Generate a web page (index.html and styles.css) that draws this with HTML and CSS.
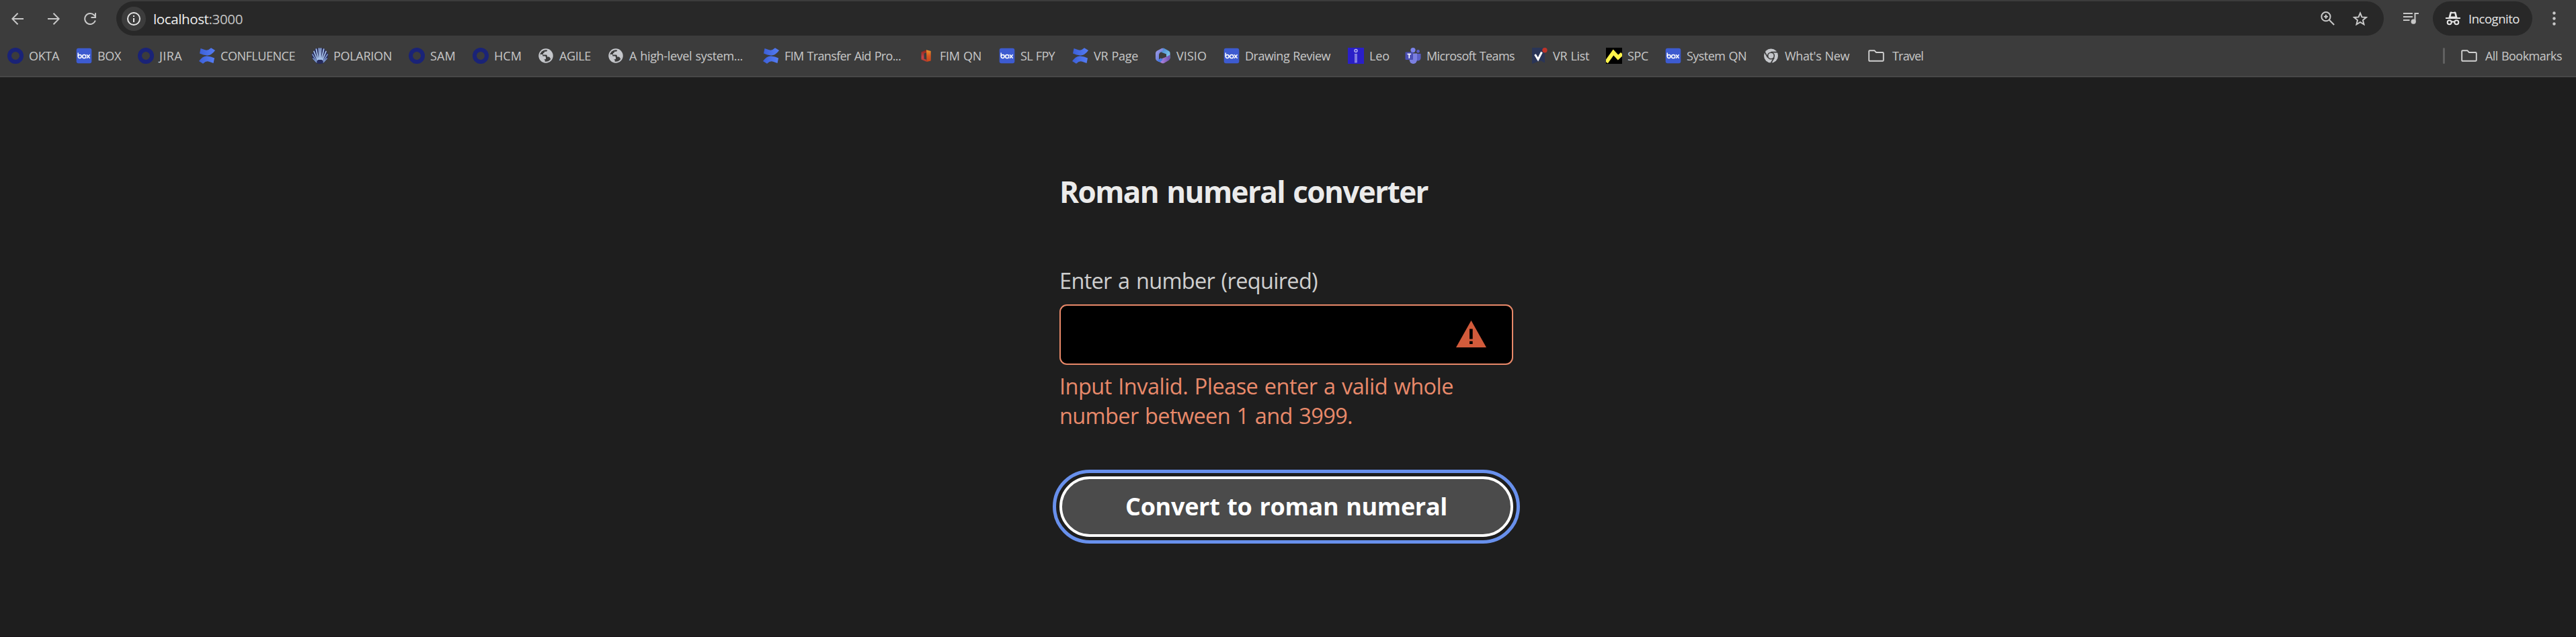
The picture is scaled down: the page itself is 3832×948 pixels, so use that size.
FILE: index.html
```html
<!DOCTYPE html>
<html lang="en">
<head>
<meta charset="utf-8">
<title>Roman numeral converter</title>
<link rel="stylesheet" href="styles.css">
</head>
<body>
<svg class="defs" aria-hidden="true">
  <defs>
    <linearGradient id="confG" x1="0" y1="0" x2="1" y2="0"><stop offset="0" stop-color="#3c5fd6"/><stop offset="1" stop-color="#557df5"/></linearGradient>
    <linearGradient id="m1" x1="0" y1="0" x2="1" y2="1"><stop offset="0" stop-color="#a9a0ea"/><stop offset="1" stop-color="#4169cf"/></linearGradient>
    <linearGradient id="m2" x1="0" y1="0" x2="1" y2="1"><stop offset="0" stop-color="#3e7fd0"/><stop offset="1" stop-color="#8fd6ee"/></linearGradient>
    <linearGradient id="m3" x1="0" y1="0" x2="1" y2="0"><stop offset="0" stop-color="#c99af0"/><stop offset="1" stop-color="#6d4fae"/></linearGradient>
    <linearGradient id="offG" x1="0" y1="0" x2="0" y2="1"><stop offset="0" stop-color="#e8962c"/><stop offset=".5" stop-color="#d9571f"/><stop offset="1" stop-color="#c5431d"/></linearGradient>
    <linearGradient id="offL" x1="0" y1="0" x2="0" y2="1"><stop offset="0" stop-color="#8e2416"/><stop offset=".6" stop-color="#c8424a"/><stop offset="1" stop-color="#b03a2a"/></linearGradient>
    <symbol id="ring" viewBox="0 0 24 24"><circle cx="12" cy="12" r="9" fill="none" stroke="#1a2377" stroke-width="6"/></symbol>
    <symbol id="box" viewBox="0 0 24 24"><rect x=".7" y=".7" width="22.6" height="22.6" rx="3" fill="#3d5bd0"/><g fill="none" stroke="#fff" stroke-width="1.5"><path d="M3.200 7.500v5.600"/><circle cx="5.700" cy="13" r="2.400"/><circle cx="12.200" cy="13" r="2.600"/><path d="M16 10.200l4.600 5.600M20.600 10.200L16 15.800"/></g></symbol>
    <symbol id="conf" viewBox="0 0 24 24"><path d="M2.500 1 9 3.200Q13 5 18 .3L24 4Q18 12 12 11.400T1 8.400z" fill="url(#confG)"/><path d="M21.500 23 15 20.800Q11 19 6 23.700L0 20Q6 12 12 12.600T23 15.600z" fill="url(#confG)"/></symbol>
    <symbol id="shell" viewBox="0 0 24 24"><path d="M5 2Q12-1.500 19 2L24 10 23.500 16 17 23Q12 25 7 23L.5 16 0 10z" fill="#262b5c"/><g stroke="#a5c0e8" stroke-width="1.800" stroke-linecap="round"><path d="M10.600 1.200l.6 16M13.400 1.200l-.6 16M6.400 2.200l3.200 15M17.600 2.200l-3.200 15M3 5.500l5.200 12.500M21 5.500l-5.200 12.500"/><path d="M.9 10l6 9.500M23.100 10l-6 9.500M1.800 16l5 5.500M22.200 16l-5 5.500" stroke="#7f9bd0" stroke-width="1.500"/></g></symbol>
    <symbol id="globe" viewBox="0 0 24 24"><circle cx="12" cy="12" r="9.800" fill="none" stroke="#c5c7cb" stroke-width="1.900"/><path d="M4.500 6Q7.500 2 12 2.200h3.500Q15 6 12 6H9.500v2.500H7.500v2.800h5.500q2 .2 2 3h2.500q2.200 0 3 1.700-2 4-6 5.400v-1.600h-2.500v-3.600H9L2.200 10z" fill="#c5c7cb" opacity="0"/><path d="M2.500 10.500 8.500 16q.2 1.500 2 1.500v3.800Q4 20.500 2.500 14z" fill="#c5c7cb"/><path d="M14.500 2.500Q14.500 5.500 12 5.800H10q.2 2.400-2 2.500 0 2-.5 2.200H12.500q1.500 0 1.500 3h1.500q2.800-.2 3.500 3.500Q22.500 13 21.500 9 19.500 4 14.500 2.500z" fill="#c5c7cb"/><path d="M2.600 10h4.600v2.500h3.300q1.500 0 1.500 2v2.500H8z" fill="#c5c7cb"/></symbol>
    <symbol id="office" viewBox="0 0 24 24"><path d="M12 3.200 4.500 6.500v11l8 3.500V18L8.500 16.500V8.500L13 7z" fill="url(#offL)"/><path d="M12 3.200 18.700 5v14.500L12.500 21z" fill="url(#offG)"/></symbol>
    <symbol id="m365" viewBox="0 0 24 24"><path d="M10.500.8 3 4.700Q1 6 1 8.300V16q0 2 1.700 3.200L6 21V11Q6 8 9 6.500L15 3 12.800 1z" fill="url(#m1)"/><path d="M12 .6q1-.2 2 .4l7 4q1.600 1 1.600 3v8L17 13V9.500L9 6.500 12.500 4z" fill="url(#m2)"/><path d="M22.600 10.500V15.500q0 2-1.800 3.200L14 22.800q-2 1-4 0L3.500 19.200 17 13.500z" fill="url(#m3)"/><path d="M3 19.500 8.500 15.500 12 17.500 8 21.800z" fill="#4a7be0"/></symbol>
    <symbol id="leo" viewBox="0 0 24 24"><rect width="24" height="24" fill="#2a1fc8"/><circle cx="12" cy="4.500" r="2" fill="none" stroke="#b9b5ee" stroke-width="1.400"/><rect x="10.600" y="9.500" width="2.800" height="12.500" fill="#7d78de" stroke="#b9b5ee" stroke-width=".5"/></symbol>
    <symbol id="teams" viewBox="0 0 24 24"><circle cx="19.500" cy="5.300" r="2.400" fill="#5b5fc7"/><circle cx="12" cy="3.600" r="3.600" fill="#7b83eb"/><path d="M17 9h6.500v6.500a4 4 0 0 1-6.500 3z" fill="#5b5fc7"/><path d="M7 8.500h11v9.300a5.700 6.200 0 0 1-11.400 0z" fill="#7b7fe0"/><rect x=".5" y="6.500" width="11.500" height="11.500" rx="1" fill="#4b4fb5"/><path d="M3.500 9.500h5.600M6.300 9.500v6.200" stroke="#fff" stroke-width="1.700"/></symbol>
    <symbol id="vr" viewBox="0 0 24 24"><path d="M1 0h19v22.500l-6-3-5 1.500L1 24z" fill="#2a3557"/><path d="M5.500 10 10 17.500 15.500 6.500" fill="none" stroke="#fff" stroke-width="3"/><circle cx="20" cy="3.700" r="3.700" fill="#bf3427"/></symbol>
    <symbol id="spc" viewBox="0 0 24 24"><rect width="24" height="24" fill="#000"/><path d="M.5 21.500 11 7l7 7.500L24 9" fill="none" stroke="#fff44a" stroke-width="5.600"/></symbol>
    <symbol id="chrome" viewBox="0 0 24 24"><circle cx="11.500" cy="12" r="10.500" fill="#c5c7cb"/><circle cx="11.500" cy="12" r="5.600" fill="#3c3c3c"/><circle cx="11.500" cy="12" r="4" fill="#c5c7cb"/><path d="M11.500 6.700H22M6.800 14.600 1.500 5.500M16.200 14.700l-5.300 9.100" stroke="#3c3c3c" stroke-width="1.700"/></symbol>
    <symbol id="folder" viewBox="0 0 24 24"><path d="M1.200 18.500V5.500q0-1.300 1.300-1.300h6.800L12 7h9.500q1.300 0 1.300 1.300v10.200q0 1.300-1.300 1.300h-19q-1.300 0-1.300-1.300z" fill="none" stroke="#d0d0d0" stroke-width="1.900"/></symbol>
  </defs>
</svg>

<header class="browser">
  <div class="toolbar">
    <nav class="nav">
      <svg class="nav-icon" viewBox="0 0 18 18"><path d="M18 9H1.500M9.500 .8 1.300 9l8.200 8.200"/></svg>
      <svg class="nav-icon" viewBox="0 0 18 18"><path d="M0 9h16.500M8.500 .8 16.700 9l-8.200 8.200"/></svg>
      <svg class="nav-icon" viewBox="0 0 18 18"><path d="M16.800 11.500A8 8 0 1 1 15 3.500L17 6M17 .3V7H10.500"/></svg>
    </nav>
    <div class="omnibox">
      <span class="site-info"><svg viewBox="0 0 20 20"><circle cx="10" cy="10" r="9" fill="none" stroke="#e6e6e6" stroke-width="2"/><path d="M10 9v6M10 5v2" stroke="#e6e6e6" stroke-width="2"/></svg></span>
      <span class="url fit" data-width="133"><b>localhost</b>:3000</span>
      <svg class="zoom-icon" viewBox="0 0 21 21"><circle cx="8" cy="7.700" r="6.600"/><path d="M12.800 12.500 20.200 20M8 4.700v6M5 7.700h6"/></svg>
      <svg class="star-icon" viewBox="0 0 22 21"><path d="M11 2.500l2.500 5.900 6.400.5-4.900 4.200 1.500 6.200-5.500-3.300-5.500 3.300 1.500-6.200-4.900-4.200 6.400-.5z"/></svg>
    </div>
    <svg class="media-icon" viewBox="0 0 23 17"><path d="M0 1.100h14M0 6h14M0 10.900h9.500M17.500 13V1.100H23" fill="none" stroke="#c8c8c8" stroke-width="2"/><circle cx="15.200" cy="13.200" r="3.600" fill="#c8c8c8"/></svg>
    <div class="incognito">
      <svg viewBox="0 0 22 21"><path d="M4.500 9 6.500 1.500Q7 0 8.500.5L11 1.300 13.500.5Q15 0 15.500 1.500L17.500 9z" fill="#e6e6e6"/><path d="M7.700 7.500 8.700 3h4.600l1 4.500z" fill="#282828"/><path d="M0 10h22" stroke="#e6e6e6" stroke-width="2"/><g fill="none" stroke="#e6e6e6" stroke-width="2"><circle cx="5.700" cy="16.300" r="3"/><circle cx="16.300" cy="16.300" r="3"/><path d="M8.700 16q2.300-1.500 4.600 0"/></g></svg>
      <span class="fit" data-width="76">Incognito</span>
    </div>
    <svg class="menu-icon" viewBox="0 0 5 21"><circle cx="2.500" cy="2.500" r="2.200"/><circle cx="2.500" cy="10.500" r="2.200"/><circle cx="2.500" cy="18.500" r="2.200"/></svg>
  </div>

  <div class="bookmarks">
    <a class="bookmark" style="width:102px"><svg><use href="#ring"/></svg><span class="fit" data-width="45">OKTA</span></a>
    <a class="bookmark" style="width:92px"><svg><use href="#box"/></svg><span class="fit" data-width="35">BOX</span></a>
    <a class="bookmark" style="width:91px"><svg><use href="#ring"/></svg><span class="fit" data-width="34">JIRA</span></a>
    <a class="bookmark" style="width:168px"><svg><use href="#conf"/></svg><span class="fit" data-width="111">CONFLUENCE</span></a>
    <a class="bookmark" style="width:144px"><svg><use href="#shell"/></svg><span class="fit" data-width="87">POLARION</span></a>
    <a class="bookmark" style="width:95px"><svg><use href="#ring"/></svg><span class="fit" data-width="38">SAM</span></a>
    <a class="bookmark" style="width:97px"><svg><use href="#ring"/></svg><span class="fit" data-width="41">HCM</span></a>
    <a class="bookmark" style="width:104px"><svg><use href="#globe"/></svg><span class="fit" data-width="47">AGILE</span></a>
    <a class="bookmark" style="width:231px"><svg><use href="#globe"/></svg><span class="fit" data-width="169">A high-level system...</span></a>
    <a class="bookmark" style="width:231px"><svg><use href="#conf"/></svg><span class="fit" data-width="173">FIM Transfer Aid Pro...</span></a>
    <a class="bookmark" style="width:120px"><svg><use href="#office"/></svg><span class="fit" data-width="62">FIM QN</span></a>
    <a class="bookmark" style="width:109px"><svg><use href="#box"/></svg><span class="fit" data-width="51">SL FPY</span></a>
    <a class="bookmark" style="width:123px"><svg><use href="#conf"/></svg><span class="fit" data-width="66">VR Page</span></a>
    <a class="bookmark" style="width:102px"><svg><use href="#m365"/></svg><span class="fit" data-width="45">VISIO</span></a>
    <a class="bookmark" style="width:185px"><svg><use href="#box"/></svg><span class="fit" data-width="127">Drawing Review</span></a>
    <a class="bookmark" style="width:85px"><svg><use href="#leo"/></svg><span class="fit" data-width="30">Leo</span></a>
    <a class="bookmark" style="width:188px"><svg><use href="#teams"/></svg><span class="fit" data-width="131">Microsoft Teams</span></a>
    <a class="bookmark" style="width:111px"><svg><use href="#vr"/></svg><span class="fit" data-width="54">VR List</span></a>
    <a class="bookmark" style="width:88px"><svg><use href="#spc"/></svg><span class="fit" data-width="31">SPC</span></a>
    <a class="bookmark" style="width:146px"><svg><use href="#box"/></svg><span class="fit" data-width="89">System QN</span></a>
    <a class="bookmark" style="width:156px"><svg><use href="#chrome"/></svg><span class="fit" data-width="96">What's New</span></a>
    <a class="bookmark folder"><svg><use href="#folder"/></svg><span class="fit" data-width="46">Travel</span></a>
    <span class="divider"></span>
    <a class="bookmark folder"><svg><use href="#folder"/></svg><span class="fit" data-width="114">All Bookmarks</span></a>
  </div>
</header>

<main class="page">
  <form class="converter">
    <h1><span class="fit" data-width="548">Roman numeral converter</span></h1>
    <label for="num"><span class="fit" data-width="384">Enter a number (required)</span></label>
    <div class="field">
      <input id="num" type="text">
      <svg class="alert" viewBox="0 0 45 40"><path d="M22.500 0 45 40H0z" fill="#d25b3b"/><path d="M20 12.500h4.700v15H20zM20 30.800h4.700v4.200H20z" fill="#000"/></svg>
    </div>
    <p class="error"><span class="fit" data-width="586">Input Invalid. Please enter a valid whole</span><br><span class="fit" data-width="436">number between 1 and 3999.</span></p>
    <button type="button"><span class="fit" data-width="479">Convert to roman numeral</span></button>
  </form>
</main>
<script src="fit.js"></script>
</body>
</html>
```
FILE: styles.css
```css
* { box-sizing: border-box; }

body {
  margin: 0;
  height: 948px;
  display: flex;
  flex-direction: column;
  overflow: hidden;
  background: #1e1e1e;
  color: #ebebeb;
  font-family: "Open Sans", "Noto Sans", sans-serif;
}

.defs { position: absolute; width: 0; height: 0; }
.fit { display: inline-block; white-space: nowrap; word-spacing: .05em; }

.browser {
  height: 115px;
  flex: none;
  background: #3c3c3c;
  border-bottom: 2px solid #474747;
}

.toolbar {
  display: flex;
  align-items: center;
  height: 53px;
  padding: 2px 30px 0 17px;
}

.nav { display: flex; gap: 36px; width: 156px; flex: none; }
.nav-icon { width: 18px; height: 18px; fill: none; stroke: #c8c8c8; stroke-width: 2; }

.omnibox {
  display: flex;
  align-items: center;
  width: 3373px;
  height: 51px;
  padding: 0 24px 0 8px;
  border-radius: 26px;
  background: #282828;
}

.site-info {
  display: flex;
  align-items: center;
  justify-content: center;
  width: 36px;
  height: 36px;
  border-radius: 50%;
  background: #3c3c3c;
}
.site-info svg { width: 20px; height: 20px; }

.url { margin: 0 auto 0 11px; font-size: 20.500px; line-height: 30px; color: #c4c4c4; }
.url b { font-weight: 400; color: #f0f0f0; }

.zoom-icon, .star-icon { fill: none; stroke: #c8c8c8; stroke-width: 2; }
.zoom-icon { width: 21px; height: 21px; margin-right: 27px; }
.star-icon { width: 22px; height: 21px; }

.media-icon { width: 23px; height: 17px; margin: 0 21px 0 29px; }

.incognito {
  display: flex;
  align-items: center;
  gap: 12px;
  width: 148px;
  height: 51px;
  padding-left: 19px;
  border-radius: 26px;
  background: #282828;
  color: #e6e6e6;
  font-size: 18.500px;
}
.incognito svg { width: 22px; height: 21px; }

.menu-icon { width: 5px; height: 21px; margin-left: auto; fill: #c8c8c8; }

.bookmarks { display: flex; align-items: center; height: 60px; padding: 0 21px 0 11px; }
.bookmark {
  display: flex;
  align-items: center;
  flex: none;
  gap: 8px;
  color: #c8c8c8;
  font-size: 18px;
  line-height: 24px;
}
.bookmark svg { width: 24px; height: 24px; flex: none; }
.folder { gap: 12px; }
.divider { width: 3px; height: 24px; margin: 0 24px 0 auto; border-radius: 2px; background: #606060; }

.page { flex: 1; border-bottom: 1px solid #1a1418; }

.converter {
  display: flex;
  flex-direction: column;
  width: 675px;
  margin-left: 1576px;
  padding-top: 139px;
}

h1 { margin: 0; height: 134px; font-size: 44px; font-weight: 700; line-height: 62px; }

label { height: 65px; font-size: 32.500px; line-height: 44px; padding-top: 8px; color: #cfcfcf; }

.field { position: relative; height: 90px; }
.field input {
  display: block;
  width: 100%;
  height: 100%;
  border: 2px solid #e88869;
  border-radius: 11px;
  background: #000;
}
.alert { position: absolute; right: 40px; top: 24px; width: 45px; height: 40px; }

.error { margin: 10px 0 0; height: 156px; font-size: 32.500px; line-height: 44px; color: #e98a6b; }

button {
  height: 90px;
  padding: 0;
  border: 4px solid #fff;
  border-radius: 45px;
  outline: 5px solid #6890ec;
  outline-offset: 5px;
  background: #4b4b4b;
  color: #fff;
  font: 700 36px/50px "Open Sans", "Noto Sans", sans-serif;
}
```
FILE: fit.js
```js
// Tightens or loosens letter spacing so each label takes its set width.
document.querySelectorAll('.fit').forEach(function (el) {
  var gap = Number(el.dataset.width) - el.getBoundingClientRect().width;
  el.style.letterSpacing = gap / el.textContent.length + 'px';
});
```
